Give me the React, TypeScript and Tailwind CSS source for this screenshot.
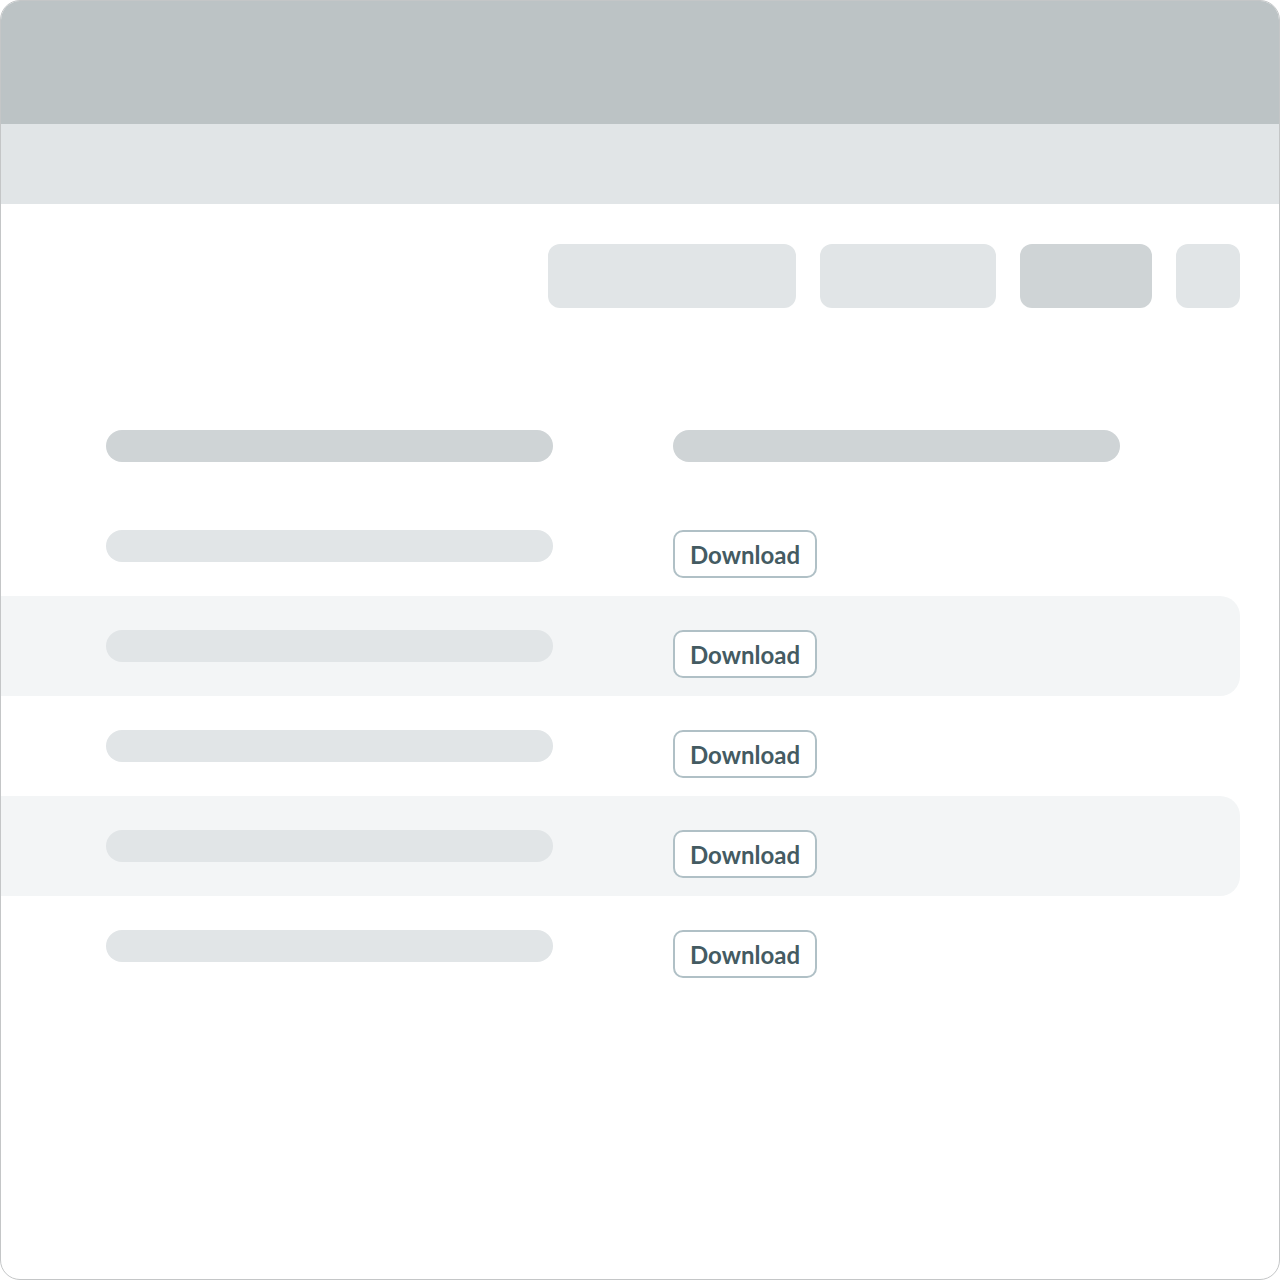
const rows = [false, true, false, true, false];

function DownloadButton() {
  return (
    <button className="h-12 w-[144px] rounded-[10px] border-2 border-[#b0c0c6] bg-white pt-0.5 text-[24px] font-bold text-[#445b62] leading-none">
      Download
    </button>
  );
}

export default function App() {
  return (
    <div className="w-[1280px] h-[1280px] bg-white" style={{ fontFamily: 'Lato, "Liberation Sans", sans-serif' }}>
      <div className="w-full h-full rounded-[20px] border border-[#c4c6c7] overflow-hidden flex flex-col">
        <div className="h-[123px] bg-[#bcc3c5] shrink-0" />
        <div className="h-[80px] bg-[#e1e5e7] shrink-0" />

        <div className="flex justify-end gap-6 pt-10 pr-[39px]">
          <div className="h-16 w-[248px] rounded-xl bg-[#e1e5e7]" />
          <div className="h-16 w-[176px] rounded-xl bg-[#e1e5e7]" />
          <div className="h-16 w-[132px] rounded-xl bg-[#cfd4d6]" />
          <div className="h-16 w-16 rounded-xl bg-[#e1e5e7]" />
        </div>

        <div className="mt-[88px] flex flex-col">
          <div className="h-[100px] flex gap-[120px] pl-[105px] pt-[34px]">
            <div className="h-8 w-[447px] rounded-full bg-[#cfd4d6]" />
            <div className="h-8 w-[447px] rounded-full bg-[#cfd4d6]" />
          </div>
          {rows.map((striped, i) => (
            <div
              key={i}
              className={
                striped
                  ? 'h-[100px] mr-[39px] rounded-r-[20px] bg-[#f3f5f6] flex gap-[120px] pl-[105px] pt-[34px]'
                  : 'h-[100px] mr-[39px] flex gap-[120px] pl-[105px] pt-[34px]'
              }
            >
              <div className="h-8 w-[447px] rounded-full bg-[#e1e5e7]" />
              <DownloadButton />
            </div>
          ))}
        </div>
      </div>
    </div>
  );
}
